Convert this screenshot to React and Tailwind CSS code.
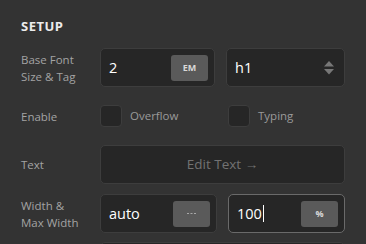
import React from "react";

const font = { fontFamily: '"Open Sans", "Liberation Sans", sans-serif' };

function Label({ children }) {
  return (
    <div className="w-[79px] shrink-0 text-[11.5px] leading-[17px] text-[#a3a3a3]">
      {children}
    </div>
  );
}

function Box({ children, className = "" }) {
  return (
    <div
      className={`flex h-[39px] items-center rounded-[5px] border border-[#3d3d3d] bg-[#262626] ${className}`}
    >
      {children}
    </div>
  );
}

function Unit({ children }) {
  return (
    <div className="flex h-[26px] w-[37px] items-center justify-center rounded-[3px] bg-[#5a5a5a] text-[9px] font-bold text-[#d8d8d8]">
      {children}
    </div>
  );
}

function Check({ label }) {
  return (
    <div className="flex flex-1 items-center gap-[8px]">
      <div className="h-[22px] w-[22px] rounded-[4px] border border-[#3d3d3d] bg-[#262626]" />
      <span className="text-[11.5px] text-[#9a9a9a]">{label}</span>
    </div>
  );
}

export default function App() {
  return (
    <div
      className="h-[244px] w-[366px] overflow-hidden bg-[#333333] pl-[21px] pr-[21px] pt-[18px]"
      style={font}
    >
      <div className="text-[13px] font-bold leading-[17px] tracking-[0.5px] text-[#ececec]">
        SETUP
      </div>

      <div className="mt-[13px] flex items-center">
        <Label>
          Base Font
          <br />
          Size &amp; Tag
        </Label>
        <div className="flex flex-1 gap-[11px]">
          <Box className="flex-1 justify-between pl-[8px] pr-[6px]">
            <span className="text-[14.5px] text-white">2</span>
            <Unit>EM</Unit>
          </Box>
          <Box className="flex-1 justify-between pl-[8px] pr-[10px]">
            <span className="text-[14.5px] text-white">h1</span>
            <svg width="10" height="14" viewBox="0 0 10 14">
              <polygon points="5,0 10,5.5 0,5.5" fill="#777" />
              <polygon points="0,8 10,8 5,13.5" fill="#777" />
            </svg>
          </Box>
        </div>
      </div>

      <div className="mt-[18px] flex h-[22px] items-center">
        <Label>Enable</Label>
        <div className="flex flex-1 gap-[11px]">
          <Check label="Overflow" />
          <Check label="Typing" />
        </div>
      </div>

      <div className="mt-[18px] flex items-center">
        <Label>Text</Label>
        <Box className="flex-1 justify-center">
          <span className="text-[13.5px] text-[#727272]">Edit Text →</span>
        </Box>
      </div>

      <div className="mt-[10px] flex items-center">
        <Label>
          Width &amp;
          <br />
          Max Width
        </Label>
        <div className="flex flex-1 gap-[11px]">
          <Box className="flex-1 justify-between pl-[8px] pr-[6px]">
            <span className="text-[14.5px] text-white">auto</span>
            <Unit>
              <svg width="9" height="2" viewBox="0 0 9 2">
                <rect x="0" y="0" width="2" height="1" fill="#a8a8a8" />
                <rect x="3.5" y="0" width="2" height="1" fill="#a8a8a8" />
                <rect x="7" y="0" width="2" height="1" fill="#a8a8a8" />
              </svg>
            </Unit>
          </Box>
          <Box className="flex-1 justify-between border-[#6a6a6a] pl-[8px] pr-[6px]">
            <span className="flex items-center text-[14.5px] text-white">
              100
              <span className="ml-[1px] inline-block h-[17px] w-[1px] bg-white" />
            </span>
            <Unit>%</Unit>
          </Box>
        </div>
      </div>

      <div className="mt-[9px] flex items-center">
        <div className="w-[79px] shrink-0" />
        <Box className="flex-1" />
      </div>
    </div>
  );
}
